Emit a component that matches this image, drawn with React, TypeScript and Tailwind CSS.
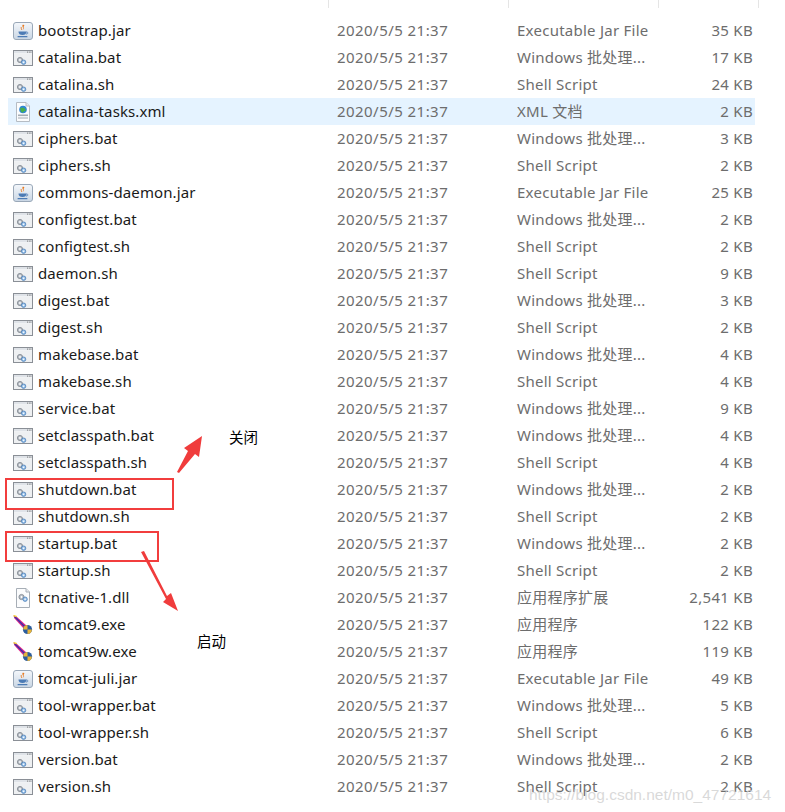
import React from "react";

type Kind = "jar" | "bat" | "xml" | "dll" | "exe";
type Row = { name: string; kind: Kind; type: string; size: string };

const BAT = "Windows 批处理...";
const SH = "Shell Script";
const JAR = "Executable Jar File";

const rows: Row[] = [
  { name: "bootstrap.jar", kind: "jar", type: JAR, size: "35 KB" },
  { name: "catalina.bat", kind: "bat", type: BAT, size: "17 KB" },
  { name: "catalina.sh", kind: "bat", type: SH, size: "24 KB" },
  { name: "catalina-tasks.xml", kind: "xml", type: "XML 文档", size: "2 KB" },
  { name: "ciphers.bat", kind: "bat", type: BAT, size: "3 KB" },
  { name: "ciphers.sh", kind: "bat", type: SH, size: "2 KB" },
  { name: "commons-daemon.jar", kind: "jar", type: JAR, size: "25 KB" },
  { name: "configtest.bat", kind: "bat", type: BAT, size: "2 KB" },
  { name: "configtest.sh", kind: "bat", type: SH, size: "2 KB" },
  { name: "daemon.sh", kind: "bat", type: SH, size: "9 KB" },
  { name: "digest.bat", kind: "bat", type: BAT, size: "3 KB" },
  { name: "digest.sh", kind: "bat", type: SH, size: "2 KB" },
  { name: "makebase.bat", kind: "bat", type: BAT, size: "4 KB" },
  { name: "makebase.sh", kind: "bat", type: SH, size: "4 KB" },
  { name: "service.bat", kind: "bat", type: BAT, size: "9 KB" },
  { name: "setclasspath.bat", kind: "bat", type: BAT, size: "4 KB" },
  { name: "setclasspath.sh", kind: "bat", type: SH, size: "4 KB" },
  { name: "shutdown.bat", kind: "bat", type: BAT, size: "2 KB" },
  { name: "shutdown.sh", kind: "bat", type: SH, size: "2 KB" },
  { name: "startup.bat", kind: "bat", type: BAT, size: "2 KB" },
  { name: "startup.sh", kind: "bat", type: SH, size: "2 KB" },
  { name: "tcnative-1.dll", kind: "dll", type: "应用程序扩展", size: "2,541 KB" },
  { name: "tomcat9.exe", kind: "exe", type: "应用程序", size: "122 KB" },
  { name: "tomcat9w.exe", kind: "exe", type: "应用程序", size: "119 KB" },
  { name: "tomcat-juli.jar", kind: "jar", type: JAR, size: "49 KB" },
  { name: "tool-wrapper.bat", kind: "bat", type: BAT, size: "5 KB" },
  { name: "tool-wrapper.sh", kind: "bat", type: SH, size: "6 KB" },
  { name: "version.bat", kind: "bat", type: BAT, size: "2 KB" },
  { name: "version.sh", kind: "bat", type: SH, size: "2 KB" },
];

function Gears() {
  return (
    <g>
      <circle cx="7" cy="10" r="2.6" fill="#b8bec6" stroke="#7d848c" strokeWidth="0.8" />
      <circle cx="7" cy="10" r="0.9" fill="#fff" />
      <circle cx="10.6" cy="12.2" r="2.2" fill="#9cc3ea" stroke="#4b7fb8" strokeWidth="0.8" />
      <circle cx="10.6" cy="12.2" r="0.8" fill="#fff" />
    </g>
  );
}

function FileIcon({ kind }: { kind: Kind }) {
  if (kind === "jar") {
    return (
      <svg width="20" height="18" viewBox="0 0 20 18">
        <defs>
          <linearGradient id="jg" x1="0" y1="0" x2="0" y2="1">
            <stop offset="0" stopColor="#f4f7fb" />
            <stop offset="1" stopColor="#c9d6e4" />
          </linearGradient>
        </defs>
        <rect x="0.5" y="0.5" width="19" height="17" rx="2.5" fill="url(#jg)" stroke="#9aa8b8" />
        <path d="M10 2.5 C8 4.5 11.5 5.5 9.5 8 C12 6.5 9.5 5 11.5 3.5 Z" fill="#e8761b" />
        <path d="M8.5 5 C7.5 6 9 7 8.5 8" stroke="#e8761b" strokeWidth="0.9" fill="none" />
        <path d="M5.5 9.5 H13.5 C13.5 12 12 13 9.5 13 C7 13 5.5 12 5.5 9.5 Z" fill="#4c7bb5" />
        <path d="M13.3 10 C15.5 10 15.5 12 13 12" stroke="#4c7bb5" strokeWidth="0.9" fill="none" />
        <rect x="4.5" y="14" width="10" height="1.3" rx="0.6" fill="#4c7bb5" />
      </svg>
    );
  }
  if (kind === "bat") {
    return (
      <svg width="20" height="16" viewBox="0 0 20 16">
        <rect x="0.5" y="0.5" width="19" height="15" fill="#ffffff" stroke="#8a8f96" />
        <rect x="1" y="1" width="18" height="2.2" fill="#dfe3e8" />
        <rect x="14" y="1.6" width="1" height="1" fill="#777" />
        <rect x="15.8" y="1.6" width="1" height="1" fill="#777" />
        <rect x="17.4" y="1.6" width="1" height="1" fill="#777" />
        <rect x="1" y="3.2" width="18" height="11.8" fill="#eef0f2" />
        <Gears />
      </svg>
    );
  }
  if (kind === "xml") {
    return (
      <svg width="20" height="20" viewBox="0 0 20 20">
        <path d="M3.5 0.5 H13 L16.5 4 V19.5 H3.5 Z" fill="#fbfcfd" stroke="#b5bcc4" />
        <path d="M13 0.5 V4 H16.5" fill="#e6e9ed" stroke="#b5bcc4" />
        <circle cx="10" cy="7.5" r="3.8" fill="#2f86d6" />
        <path d="M7.3 6 C8.5 5 9.5 6.5 10.5 5.5 C11.5 6.5 12.5 7 13 8.5 C12 9.5 10.5 8.8 9.8 10.8 C8.5 10 7.2 9.5 7.3 6 Z" fill="#48b04a" />
        <rect x="5" y="12.5" width="10" height="1.6" fill="#a4abb3" />
        <rect x="5" y="15.2" width="10" height="1.6" fill="#c4c9cf" />
      </svg>
    );
  }
  if (kind === "dll") {
    return (
      <svg width="20" height="20" viewBox="0 0 20 20">
        <path d="M3.5 0.5 H13 L16.5 4 V19.5 H3.5 Z" fill="#fbfcfd" stroke="#a7aeb6" />
        <path d="M13 0.5 V4 H16.5" fill="#e6e9ed" stroke="#a7aeb6" />
        <g transform="translate(1.5,-1)">
          <Gears />
        </g>
      </svg>
    );
  }
  return (
    <svg width="20" height="20" viewBox="0 0 20 20">
      <path d="M0.5 0.5 L3.5 1.5 L14.5 11.5 L11.5 14.5 L1.5 3.5 Z" fill="#e0288a" />
      <path d="M1.5 1.5 L13 13" stroke="#3b2fa8" strokeWidth="1.4" />
      <path d="M0.5 0.5 L3.8 1.6" stroke="#f3d23a" strokeWidth="1.4" />
      <circle cx="14.5" cy="14.5" r="4.6" fill="#2c5e9e" />
      <path d="M10.2 14.5 A4.3 4.3 0 0 1 14.5 10 V14.5 Z" fill="#e8b43a" />
      <path d="M18.9 14.5 A4.3 4.3 0 0 1 14.5 18.9 V14.5 Z" fill="#e8b43a" />
    </svg>
  );
}

export default function App() {
  const font = { fontFamily: '"Noto Sans", "Noto Sans CJK SC", sans-serif' };
  return (
    <div className="relative w-[785px] h-[812px] bg-white overflow-hidden" style={font}>
      {/* header remnant: column dividers */}
      <div className="flex h-[17px]">
        <div className="w-[329px] h-[8px] border-r border-[#e5e5e5]" />
        <div className="w-[180px] h-[8px] border-r border-[#e5e5e5]" />
        <div className="w-[150px] h-[8px] border-r border-[#e5e5e5]" />
        <div className="w-[100px] h-[8px] border-r border-[#e5e5e5]" />
      </div>

      <div className="flex flex-col">
        {rows.map((r) => (
          <div
            key={r.name}
            className={`ml-[8px] w-[747px] h-[27px] grid grid-cols-[329px_180px_1fr_auto] items-center text-[15px] leading-none ${
              r.kind === "xml" ? "bg-[#e5f3ff]" : ""
            }`}
          >
            <div className="flex items-center gap-[5px] pl-[5px]">
              <div className="w-[20px] h-[20px] flex items-center justify-center">
                <FileIcon kind={r.kind} />
              </div>
              <span className="text-[#1a1a1a] tracking-[0.1px]">{r.name}</span>
            </div>
            <span className="text-[#6d6d6d] tracking-[0.45px]">2020/5/5 21:37</span>
            <span className="text-[#6d6d6d] tracking-[0.25px]">{r.type}</span>
            <span className="text-[#6d6d6d] text-right pr-[2px] tracking-[0.3px]">{r.size}</span>
          </div>
        ))}
      </div>

      {/* annotations drawn over the list */}
      <div className="absolute left-[5px] top-[478px] w-[169px] h-[32px] border-2 border-[#f23d3d]" />
      <div className="absolute left-[5px] top-[531px] w-[154px] h-[31px] border-2 border-[#f23d3d]" />
      <svg className="absolute left-0 top-0" width="785" height="812" viewBox="0 0 785 812">
        <polygon points="177,472 188,451 184,448 202,436 199,457 195,454 179,473" fill="#f03c3c" />
        <polygon points="141,552 144,551 167,596 171,593 178,611 163,602 166,599" fill="#f03c3c" />
      </svg>
      <div className="absolute left-[229px] top-[427px] text-[14.5px] text-black">关闭</div>
      <div className="absolute left-[197px] top-[631px] text-[14.5px] text-black">启动</div>
      <div
        className="absolute left-[529px] top-[783px] text-[15.5px] text-[#cfcfcf]/80 whitespace-nowrap"
        style={{ fontFamily: '"Liberation Sans", Arial, sans-serif' }}
      >
        https://blog.csdn.net/m0_47721614
      </div>
    </div>
  );
}
